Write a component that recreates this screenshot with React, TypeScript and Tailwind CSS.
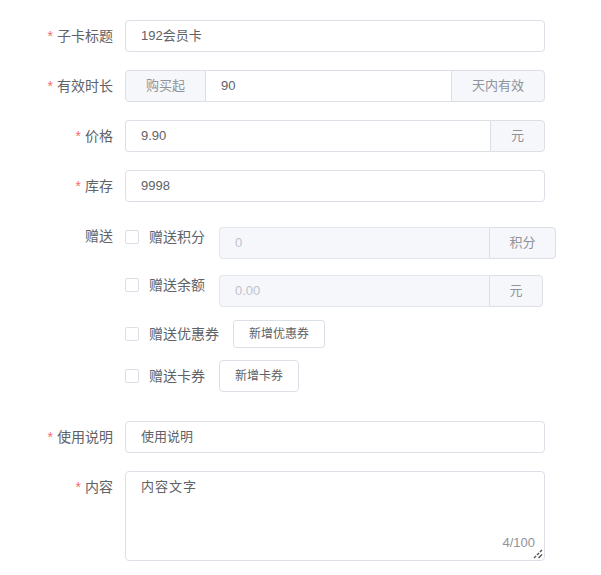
import React from "react";

const font = { fontFamily: '"Liberation Sans", "Noto Sans CJK SC", sans-serif' };

function Label({ text, required = true }: { text: string; required?: boolean }) {
  return (
    <div className="w-[113px] shrink-0 h-[32px] flex items-center justify-end text-[14px] text-[#606266] mr-[12px]">
      {required && <span className="text-[#f56c6c] mr-[4px]">*</span>}
      <span>{text}</span>
    </div>
  );
}

function Checkbox() {
  return <span className="w-[14px] h-[14px] border border-[#dcdfe6] rounded-[2px] bg-white shrink-0" />;
}

export default function App() {
  return (
    <div className="w-[601px] h-[575px] bg-white pt-[20px]" style={font}>
      {/* 子卡标题 */}
      <div className="flex mb-[18px]">
        <Label text="子卡标题" />
        <div className="w-[420px] h-[32px] border border-[#dcdfe6] rounded-[4px] flex items-center px-[15px] text-[13px] text-[#606266]">
          192会员卡
        </div>
      </div>
      {/* 有效时长 */}
      <div className="flex mb-[18px]">
        <Label text="有效时长" />
        <div className="w-[420px] h-[32px] flex text-[13px]">
          <div className="w-[81px] h-full bg-[#f5f7fa] border border-[#dcdfe6] rounded-l-[4px] flex items-center justify-center text-[#909399]">
            购买起
          </div>
          <div className="flex-1 h-full border-y border-[#dcdfe6] flex items-center px-[15px] text-[#606266]">90</div>
          <div className="w-[94px] h-full bg-[#f5f7fa] border border-[#dcdfe6] rounded-r-[4px] flex items-center justify-center text-[#909399]">
            天内有效
          </div>
        </div>
      </div>
      {/* 价格 */}
      <div className="flex mb-[18px]">
        <Label text="价格" />
        <div className="w-[420px] h-[32px] flex text-[13px]">
          <div className="flex-1 h-full border-y border-l border-[#dcdfe6] rounded-l-[4px] flex items-center px-[15px] text-[#606266]">
            9.90
          </div>
          <div className="w-[55px] h-full bg-[#f5f7fa] border border-[#dcdfe6] rounded-r-[4px] flex items-center justify-center text-[#909399]">
            元
          </div>
        </div>
      </div>
      {/* 库存 */}
      <div className="flex mb-[18px]">
        <Label text="库存" />
        <div className="w-[420px] h-[32px] border border-[#dcdfe6] rounded-[4px] flex items-center px-[15px] text-[13px] text-[#606266]">
          9998
        </div>
      </div>
      {/* 赠送 */}
      <div className="flex">
        <div className="w-[113px] shrink-0 h-[32px] flex items-center justify-end text-[14px] text-[#606266] mr-[12px]">
          赠送
        </div>
        <div className="flex flex-col pt-[7px]">
          <div className="flex items-start">
            <div className="h-[20px] flex items-center">
              <Checkbox />
              <span className="ml-[10px] w-[70px] text-[14px] text-[#606266]">赠送积分</span>
            </div>
            <div className="h-[32px] flex text-[13px]">
              <div className="w-[270px] h-full bg-[#f5f7fa] border-y border-l border-[#e4e7ed] rounded-l-[4px] flex items-center px-[15px] text-[#c0c4cc]">
                0
              </div>
              <div className="w-[67px] h-full bg-[#f5f7fa] border border-[#dcdfe6] rounded-r-[4px] flex items-center justify-center text-[#909399]">
                积分
              </div>
            </div>
          </div>
          <div className="flex items-start mt-[16px]">
            <div className="h-[20px] flex items-center">
              <Checkbox />
              <span className="ml-[10px] w-[70px] text-[14px] text-[#606266]">赠送余额</span>
            </div>
            <div className="h-[32px] flex text-[13px]">
              <div className="w-[270px] h-full bg-[#f5f7fa] border-y border-l border-[#e4e7ed] rounded-l-[4px] flex items-center px-[15px] text-[#c0c4cc]">
                0.00
              </div>
              <div className="w-[54px] h-full bg-[#f5f7fa] border border-[#dcdfe6] rounded-r-[4px] flex items-center justify-center text-[#909399]">
                元
              </div>
            </div>
          </div>
          <div className="flex items-center mt-[13px]">
            <div className="h-[20px] flex items-center">
              <Checkbox />
              <span className="ml-[10px] w-[84px] text-[14px] text-[#606266]">赠送优惠券</span>
            </div>
            <div className="w-[92px] h-[28px] border border-[#dcdfe6] rounded-[3px] flex items-center justify-center text-[12px] text-[#606266] bg-white">
              新增优惠券
            </div>
          </div>
          <div className="flex items-center mt-[12px]">
            <div className="h-[20px] flex items-center">
              <Checkbox />
              <span className="ml-[10px] w-[70px] text-[14px] text-[#606266]">赠送卡券</span>
            </div>
            <div className="w-[80px] h-[32px] border border-[#dcdfe6] rounded-[4px] flex items-center justify-center text-[12px] text-[#606266] bg-white">
              新增卡券
            </div>
          </div>
        </div>
      </div>
      {/* 使用说明 */}
      <div className="flex mt-[29px] mb-[18px]">
        <Label text="使用说明" />
        <div className="w-[420px] h-[32px] border border-[#dcdfe6] rounded-[4px] flex items-center px-[15px] text-[13px] text-[#606266]">
          使用说明
        </div>
      </div>
      {/* 内容 */}
      <div className="flex">
        <Label text="内容" />
        <div className="relative w-[420px] h-[90px]">
          <textarea
            readOnly
            defaultValue="内容文字"
            className="block w-full h-full border border-[#dcdfe6] rounded-[4px] px-[15px] py-[5px] text-[13px] leading-[1.5] text-[#606266] tracking-[1px] outline-none resize-none"
            style={font}
          />
          <span className="absolute right-[10px] bottom-[12px] text-[13px] text-[#909399] leading-none bg-white">4/100</span>
          <svg className="absolute right-[2px] bottom-[2px]" width="12" height="12" viewBox="0 0 12 12">
            <line x1="3" y1="11" x2="11" y2="3" stroke="#555" strokeWidth="1.4" strokeDasharray="3 1.2" />
            <line x1="7.5" y1="11" x2="11" y2="7.5" stroke="#555" strokeWidth="1.4" />
          </svg>
        </div>
      </div>
    </div>
  );
}
